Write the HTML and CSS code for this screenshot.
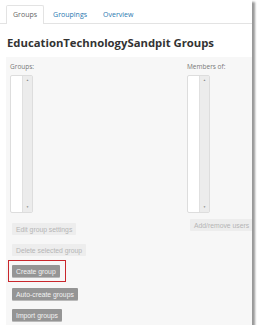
FILE: index.html
```html
<!DOCTYPE html>
<html lang="en">
<head>
  <meta charset="UTF-8" />
  <meta name="viewport" content="width=device-width, initial-scale=1.0">
  <title>Groups</title>
  <link rel="stylesheet" href="styles.css">
</head>
<body>

  <div class="page">

    <!-- tabs -->
    <ul class="tabs">
      <li class="tab active">Groups</li>
      <li class="tab">Groupings</li>
      <li class="tab">Overview</li>
    </ul>

    <h2 class="title">EducationTechnologySandpit Groups</h2>

    <div class="panel">
      <div class="col col-groups">
        <div class="label">Groups:</div>
        <div class="listbox">
          <div class="list-area"></div>
          <div class="scrollbar">
            <span class="arrow">&#9650;</span>
            <span class="arrow">&#9660;</span>
          </div>
        </div>

        <div class="buttons">
          <button class="btn disabled">Edit group settings</button>
          <button class="btn disabled">Delete selected group</button>
          <div class="highlight">
            <button class="btn">Create group</button>
          </div>
          <button class="btn">Auto-create groups</button>
          <button class="btn">Import groups</button>
        </div>
      </div>

      <div class="col col-members">
        <div class="label">Members of:</div>
        <div class="listbox">
          <div class="list-area"></div>
          <div class="scrollbar">
            <span class="arrow">&#9650;</span>
            <span class="arrow">&#9660;</span>
          </div>
        </div>
        <button class="btn disabled btn-users">Add/remove users</button>
      </div>
    </div>

  </div>

</body>
</html>
```

FILE: styles.css
```css
body {
  margin: 0;
  background-color: #fff;
  font-family: 'Open Sans', sans-serif;
}

.page {
  width: 252px;
  height: 325px;
  background-color: #fff;
  box-shadow: 3px 2px 2px #999;
  overflow: hidden;
}

/* tabs */
.tabs {
  list-style: none;
  margin: 0;
  padding: 5px 0 0 6px;
  display: flex;
  border-bottom: 1px solid #e3e3e3;
}

.tab {
  font-size: 7px;
  line-height: 17px;
  height: 17px;
  padding: 0 6px;
  margin-right: 2px;
  color: #2a78b0;
  border: 1px solid transparent;
  border-bottom: none;
  margin-bottom: -1px;
}

.tab.active {
  color: #666;
  background: #fff;
  border-color: #e3e3e3;
  border-radius: 2px 2px 0 0;
  height: 18px;
}

.title {
  font-size: 11.3px;
  font-weight: bold;
  color: #333;
  margin: 0;
  padding: 10px 0 0 7px;
  line-height: 17px;
  height: 23px;
}

/* grey panel */
.panel {
  margin-left: 6px;
  background-color: #f7f7f7;
  height: 268px;
  display: flex;
  justify-content: space-between;
}

.col-groups {
  padding-left: 4px;
}

.col-members {
  width: 65px;
  display: flex;
  flex-direction: column;
  align-items: flex-start;
}

.label {
  font-size: 6.5px;
  color: #777;
  line-height: 9px;
  padding-top: 5px;
  height: 13px;
}

.listbox {
  width: 21px;
  height: 136px;
  border: 1px solid #ddd;
  border-radius: 2px;
  display: flex;
  background: #fff;
}

.list-area {
  flex: 1;
}

.scrollbar {
  width: 9px;
  background: #ececec;
  border-left: 1px solid #e0e0e0;
  display: flex;
  flex-direction: column;
  justify-content: space-between;
  align-items: center;
  padding: 3px 0;
}

.arrow {
  font-size: 3px;
  color: #888;
  line-height: 3px;
}

.buttons {
  display: flex;
  flex-direction: column;
  align-items: flex-start;
  padding-top: 10px;
  padding-left: 2px;
}

.btn {
  font-family: 'Liberation Sans', Arial, sans-serif;
  font-size: 6.8px;
  height: 12px;
  padding: 0 4px;
  border: none;
  border-radius: 1px;
  background-color: #959595;
  color: #f2f2f2;
  margin-bottom: 9px;
  box-shadow: 0 1px 0 #bbb;
}

.btn.disabled {
  background-color: #ededed;
  color: #b5b5b5;
  box-shadow: none;
}

.highlight {
  display: flex;
  border: 1px solid #c9262c;
  padding: 4px 5px 4px 3px;
  margin: -5px 0 6px -4px;
}

.highlight .btn {
  margin-bottom: 0;
}

.btn-users {
  margin-top: 6px;
  margin-left: 3px;
  white-space: nowrap;
}
```
